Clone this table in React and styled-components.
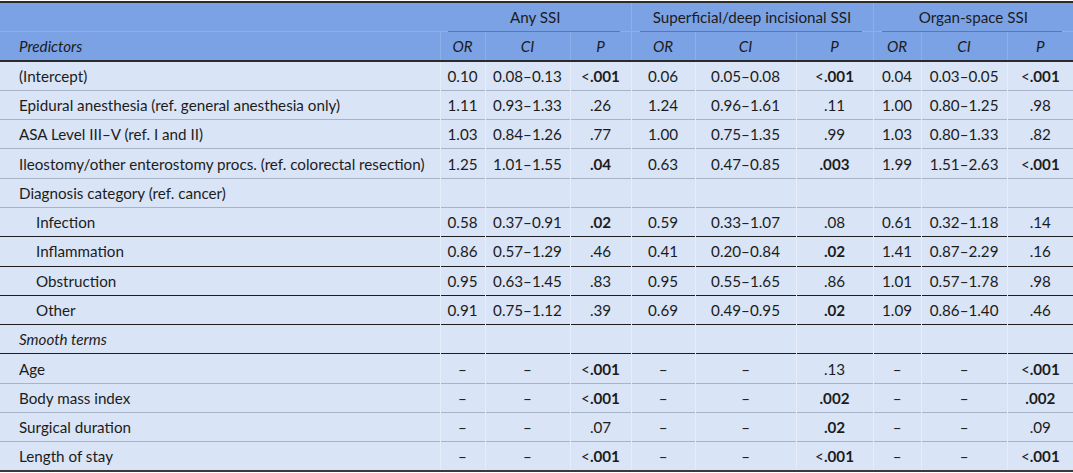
import React from "react";
import styled, { createGlobalStyle, css } from "styled-components";

const Global = createGlobalStyle`
  html, body { margin: 0; padding: 0; background: #ffffff; }
  body { font-family: Lato, "Noto Sans", sans-serif; color: #1c1c1c; }
`;

const Wrap = styled.div`
  padding-top: 1px;
  width: 1073px;
`;

const Table = styled.table`
  width: 1073px;
  table-layout: fixed;
  border-collapse: collapse;
  font-size: 15.2px;
  border-top: 2px solid #2b2b2b;
  border-bottom: 2px solid #3a3a3a;
`;

const HeadRow = styled.tr`
  background: #7ba2e4;
  height: 29.5px;
`;

const HeadCell = styled.th`
  font-weight: normal;
  font-style: ${(p) => (p.$italic ? "italic" : "normal")};
  text-align: ${(p) => (p.$left ? "left" : "center")};
  padding: 0;
  padding-left: ${(p) => (p.$left ? "19px" : "0")};
  border-left: ${(p) => (p.$sep ? "1px solid #8cb0ea" : "none")};
  border-bottom: ${(p) => (p.$last ? "2px solid #2b2b2b" : "1px solid #8cb0ea")};
  vertical-align: middle;
  white-space: nowrap;
`;

const GroupLabel = styled.div`
  position: relative;
  height: 28px;
  line-height: 28px;
  &::after {
    content: "";
    position: absolute;
    left: 8px;
    right: 11px;
    bottom: -1px;
    height: 1px;
    background: #5f79a6;
  }
`;

const BodyRow = styled.tr`
  background: #d9e4f6;
  height: 29.3px;
  border-bottom: 1px solid ${(p) => (p.$strong ? "#1e1e1e" : "#a7b3c6")};
`;

const Cell = styled.td`
  padding: 0;
  text-align: center;
  vertical-align: middle;
  white-space: nowrap;
  border-left: 1px solid #e6edf9;
  ${(p) => p.$bold && css`font-weight: bold;`}
`;

const LabelCell = styled.td`
  padding: 0 0 0 ${(p) => (p.$indent ? "36px" : "19px")};
  text-align: left;
  vertical-align: middle;
  white-space: nowrap;
  font-style: ${(p) => (p.$italic ? "italic" : "normal")};
`;

const Bold = styled.b`
  font-weight: bold;
`;

const widths = [440, 45, 85, 61, 64, 101, 77, 48, 86, 66];

const rows = [
  { label: "(Intercept)", v: ["0.10", "0.08–0.13", "<*.001", "0.06", "0.05–0.08", "<*.001", "0.04", "0.03–0.05", "<*.001"] },
  { label: "Epidural anesthesia (ref. general anesthesia only)", v: ["1.11", "0.93–1.33", ".26", "1.24", "0.96–1.61", ".11", "1.00", "0.80–1.25", ".98"] },
  { label: "ASA Level III–V (ref. I and II)", v: ["1.03", "0.84–1.26", ".77", "1.00", "0.75–1.35", ".99", "1.03", "0.80–1.33", ".82"] },
  { label: "Ileostomy/other enterostomy procs. (ref. colorectal resection)", v: ["1.25", "1.01–1.55", "*.04", "0.63", "0.47–0.85", "*.003", "1.99", "1.51–2.63", "<*.001"] },
  { label: "Diagnosis category (ref. cancer)", v: ["", "", "", "", "", "", "", "", ""] },
  { label: "Infection", indent: true, strong: true, v: ["0.58", "0.37–0.91", "*.02", "0.59", "0.33–1.07", ".08", "0.61", "0.32–1.18", ".14"] },
  { label: "Inflammation", indent: true, strong: true, v: ["0.86", "0.57–1.29", ".46", "0.41", "0.20–0.84", "*.02", "1.41", "0.87–2.29", ".16"] },
  { label: "Obstruction", indent: true, strong: true, v: ["0.95", "0.63–1.45", ".83", "0.95", "0.55–1.65", ".86", "1.01", "0.57–1.78", ".98"] },
  { label: "Other", indent: true, strong: true, v: ["0.91", "0.75–1.12", ".39", "0.69", "0.49–0.95", "*.02", "1.09", "0.86–1.40", ".46"] },
  { label: "Smooth terms", italic: true, strong: true, v: ["", "", "", "", "", "", "", "", ""] },
  { label: "Age", v: ["–", "–", "<*.001", "–", "–", ".13", "–", "–", "<*.001"] },
  { label: "Body mass index", v: ["–", "–", "<*.001", "–", "–", "*.002", "–", "–", "*.002"] },
  { label: "Surgical duration", v: ["–", "–", ".07", "–", "–", "*.02", "–", "–", ".09"] },
  { label: "Length of stay", last: true, v: ["–", "–", "<*.001", "–", "–", "<*.001", "–", "–", "<*.001"] },
];

function Value({ text }) {
  if (text.includes("*")) {
    const [pre, post] = text.split("*");
    return (
      <>
        {pre}
        <Bold>{post}</Bold>
      </>
    );
  }
  return text;
}

export default function App() {
  return (
    <Wrap>
      <Global />
      <Table>
        <colgroup>
          {widths.map((w, i) => (
            <col key={i} style={{ width: w }} />
          ))}
        </colgroup>
        <thead>
          <HeadRow>
            <HeadCell $left />
            <HeadCell colSpan={3}>
              <GroupLabel>Any SSI</GroupLabel>
            </HeadCell>
            <HeadCell colSpan={3} $sep>
              <GroupLabel>Superficial/deep incisional SSI</GroupLabel>
            </HeadCell>
            <HeadCell colSpan={3} $sep>
              <GroupLabel>Organ-space SSI</GroupLabel>
            </HeadCell>
          </HeadRow>
          <HeadRow>
            <HeadCell $left $italic $last>Predictors</HeadCell>
            {["OR", "CI", "P", "OR", "CI", "P", "OR", "CI", "P"].map((h, i) => (
              <HeadCell key={i} $italic $last $sep>
                {h}
              </HeadCell>
            ))}
          </HeadRow>
        </thead>
        <tbody>
          {rows.map((r, i) => (
            <BodyRow key={i} $strong={r.strong}>
              <LabelCell $indent={r.indent} $italic={r.italic}>
                {r.label}
              </LabelCell>
              {r.v.map((t, j) => (
                <Cell key={j}>
                  <Value text={t} />
                </Cell>
              ))}
            </BodyRow>
          ))}
        </tbody>
      </Table>
    </Wrap>
  );
}
